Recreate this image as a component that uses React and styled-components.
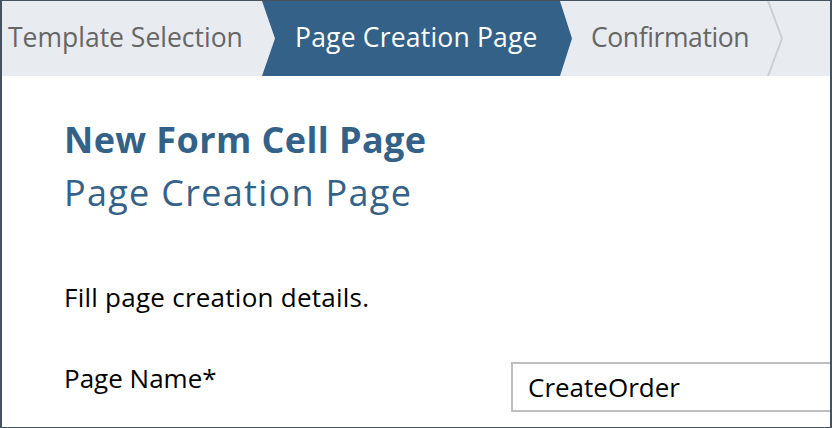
import React from 'react'
import styled, { createGlobalStyle } from 'styled-components'

const Global = createGlobalStyle`
  html, body {
    margin: 0;
    padding: 0;
    background: #ffffff;
  }
  body {
    font-family: "Open Sans", "Liberation Sans", sans-serif;
  }
`

const steps = [
  { label: 'Template Selection' },
  { label: 'Page Creation Page', active: true },
  { label: 'Confirmation' },
]

const App = () => {
  return (
    <>
      <Global />
      <Frame>
        <Header>
          <Step first>{steps[0].label}</Step>
          <Step active>{steps[1].label}</Step>
          <Step>{steps[2].label}</Step>
          <Divider viewBox="0 0 18 75" preserveAspectRatio="none">
            <polyline points="1,0 15,37.5 1,75" fill="none" stroke="#c9cfd5" strokeWidth="2" />
          </Divider>
        </Header>
        <Content>
          <Title>New Form Cell Page</Title>
          <Subtitle>Page Creation Page</Subtitle>
          <Intro>Fill page creation details.</Intro>
          <FieldRow>
            <Label>Page Name*</Label>
            <Input defaultValue="CreateOrder" />
          </FieldRow>
        </Content>
      </Frame>
    </>
  )
}

const Frame = styled.div`
  width: 832px;
  height: 428px;
  box-sizing: border-box;
  border: 2px solid #46525e;
  border-top-width: 1px;
  border-bottom-width: 1px;
  overflow: hidden;
  display: flex;
  flex-direction: column;
`

const Header = styled.div`
  height: 75px;
  flex: none;
  background: #e8ecf0;
  display: flex;
  align-items: stretch;
`

const Step = styled.div`
  display: flex;
  align-items: center;
  box-sizing: border-box;
  padding-bottom: 4px;
  font-size: 26.5px;
  color: ${({ active }) => (active ? '#ffffff' : '#666666')};
  white-space: nowrap;
  ${({ first }) => first && 'width: 260px; padding-left: 6px;'}
  ${({ active }) =>
    active &&
    `
    width: 310px;
    padding-left: 33px;
    letter-spacing: 0.2px;
    background: #346187;
    clip-path: polygon(0 0, calc(100% - 12px) 0, 100% 50%, calc(100% - 12px) 100%, 0 100%, 13px 50%);
  `}
  ${({ first, active }) => !first && !active && 'padding-left: 19px; width: 195px; letter-spacing: -0.4px;'}
`

const Divider = styled.svg`
  width: 18px;
  height: 75px;
`

const Content = styled.div`
  padding: 42px 0 0 62px;
  display: flex;
  flex-direction: column;
`

const Title = styled.h1`
  margin: 0;
  font-size: 36px;
  font-weight: 700;
  letter-spacing: 0.4px;
  color: #346187;
  line-height: 44px;
`

const Subtitle = styled.h2`
  margin: 9px 0 0;
  font-size: 36px;
  font-weight: 400;
  letter-spacing: 1.3px;
  color: #346187;
  line-height: 44px;
`

const Intro = styled.p`
  margin: 66px 0 0;
  font-size: 26px;
  letter-spacing: 0.25px;
  color: #000000;
  line-height: 32px;
`

const FieldRow = styled.div`
  margin-top: 49px;
  display: flex;
  align-items: flex-start;
`

const Label = styled.label`
  width: 447px;
  flex: none;
  font-size: 26px;
  line-height: 32px;
  color: #000000;
`

const Input = styled.input`
  width: 340px;
  height: 50px;
  box-sizing: border-box;
  border: 2px solid #bfbfbf;
  padding: 0 15px;
  font-family: "Open Sans", "Liberation Sans", sans-serif;
  font-size: 26px;
  color: #000000;
  outline: none;
  flex: none;
`

export default App
